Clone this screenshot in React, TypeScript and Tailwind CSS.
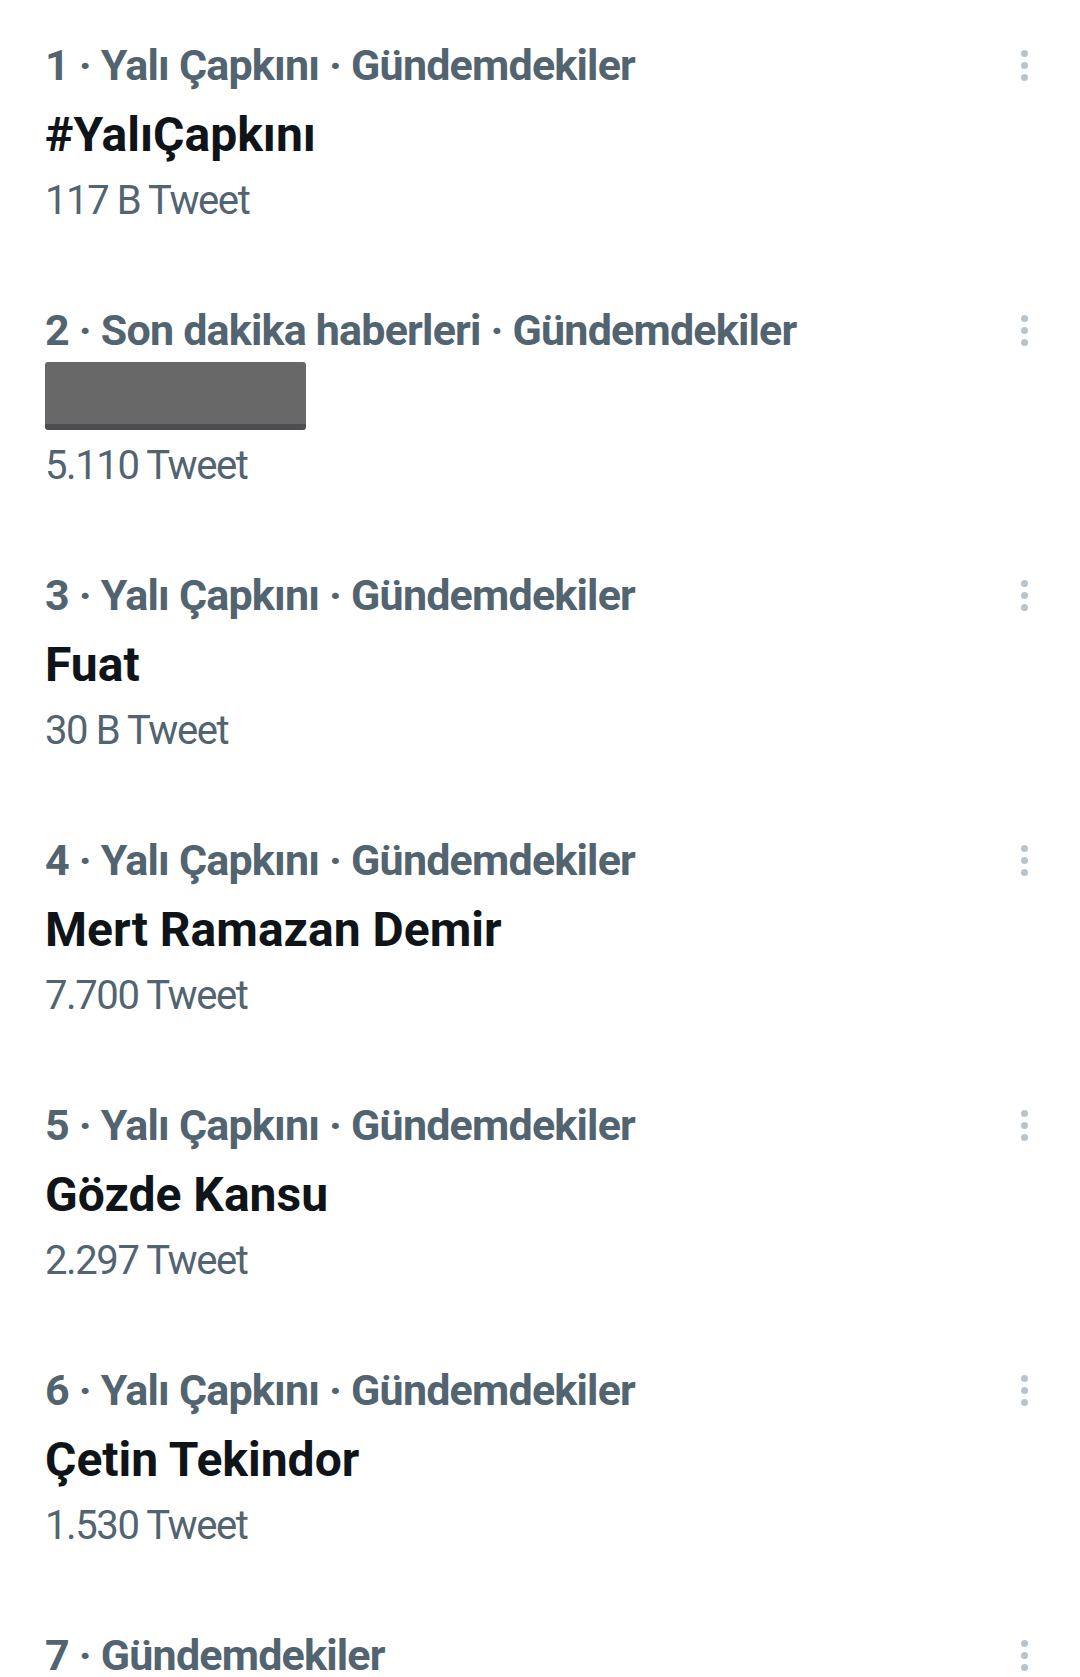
import React from "react";

type Trend = { rank: number; category: string; title?: string; count?: string; redacted?: boolean };

const trends: Trend[] = [
  { rank: 1, category: "Yalı Çapkını · Gündemdekiler", title: "#YalıÇapkını", count: "117 B Tweet" },
  { rank: 2, category: "Son dakika haberleri · Gündemdekiler", redacted: true, count: "5.110 Tweet" },
  { rank: 3, category: "Yalı Çapkını · Gündemdekiler", title: "Fuat", count: "30 B Tweet" },
  { rank: 4, category: "Yalı Çapkını · Gündemdekiler", title: "Mert Ramazan Demir", count: "7.700 Tweet" },
  { rank: 5, category: "Yalı Çapkını · Gündemdekiler", title: "Gözde Kansu", count: "2.297 Tweet" },
  { rank: 6, category: "Yalı Çapkını · Gündemdekiler", title: "Çetin Tekindor", count: "1.530 Tweet" },
  { rank: 7, category: "Gündemdekiler" },
];

function Dots() {
  return (
    <div className="flex w-[20px] flex-col items-center gap-[5px] pt-[1px]">
      <span className="h-[7px] w-[7px] rounded-full bg-[#b7c4cd]" />
      <span className="h-[7px] w-[7px] rounded-full bg-[#b7c4cd]" />
      <span className="h-[7px] w-[7px] rounded-full bg-[#b7c4cd]" />
    </div>
  );
}

function Item({ t }: { t: Trend }) {
  return (
    <div className="flex h-[265px] flex-col">
      <div className="flex h-[50px] items-center justify-between">
        <span className="text-[43px] font-bold leading-[50px] tracking-[-0.8px] text-[#536471] whitespace-nowrap">
          {t.rank} · {t.category}
        </span>
        <Dots />
      </div>
      <div className="mt-[15px] flex h-[60px] items-center">
        {t.redacted ? (
          <div className="mb-[8px] h-[68px] w-[261px] rounded-[3px] border-b-[6px] border-[#4e4e52] bg-[#686868]" />
        ) : (
          <span className="text-[48px] font-bold leading-[60px] text-[#0f1419] whitespace-nowrap">{t.title}</span>
        )}
      </div>
      <div className="mt-[11px] flex h-[50px] items-center">
        <span className="text-[40px] leading-[50px] tracking-[-1.4px] text-[#536471] whitespace-nowrap">{t.count}</span>
      </div>
    </div>
  );
}

export default function App() {
  return (
    <div
      className="h-[1677px] w-[1080px] overflow-hidden bg-white pl-[45px] pr-[46px] pt-[40px]"
      style={{ fontFamily: "Roboto, 'Liberation Sans', sans-serif" }}
    >
      {trends.map((t) => (
        <Item key={t.rank} t={t} />
      ))}
    </div>
  );
}
